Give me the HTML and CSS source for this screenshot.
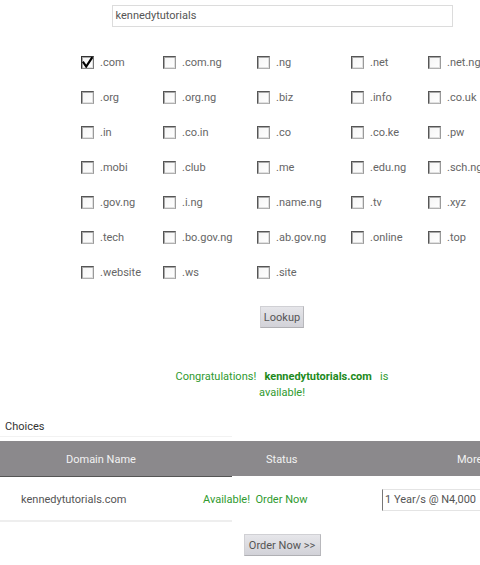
FILE: index.html
```html
<!DOCTYPE html>
<html>
<head>
<meta charset="utf-8">
<link rel="stylesheet" href="styles.css">
</head>
<body>
<div class="page">
  <div class="search">kennedytutorials</div>

  <div class="tlds">
    <label class="tld"><span class="box checked"><svg width="11" height="11" viewBox="0 0 11 11"><path d="M1.5 5.5 L4.2 9.5 L9.8 1" fill="none" stroke="#000" stroke-width="2.2" stroke-linecap="square"/></svg></span>.com</label>
    <label class="tld"><span class="box"></span>.com.ng</label>
    <label class="tld"><span class="box"></span>.ng</label>
    <label class="tld"><span class="box"></span>.net</label>
    <label class="tld"><span class="box"></span>.net.ng</label>

    <label class="tld"><span class="box"></span>.org</label>
    <label class="tld"><span class="box"></span>.org.ng</label>
    <label class="tld"><span class="box"></span>.biz</label>
    <label class="tld"><span class="box"></span>.info</label>
    <label class="tld"><span class="box"></span>.co.uk</label>

    <label class="tld"><span class="box"></span>.in</label>
    <label class="tld"><span class="box"></span>.co.in</label>
    <label class="tld"><span class="box"></span>.co</label>
    <label class="tld"><span class="box"></span>.co.ke</label>
    <label class="tld"><span class="box"></span>.pw</label>

    <label class="tld"><span class="box"></span>.mobi</label>
    <label class="tld"><span class="box"></span>.club</label>
    <label class="tld"><span class="box"></span>.me</label>
    <label class="tld"><span class="box"></span>.edu.ng</label>
    <label class="tld"><span class="box"></span>.sch.ng</label>

    <label class="tld"><span class="box"></span>.gov.ng</label>
    <label class="tld"><span class="box"></span>.i.ng</label>
    <label class="tld"><span class="box"></span>.name.ng</label>
    <label class="tld"><span class="box"></span>.tv</label>
    <label class="tld"><span class="box"></span>.xyz</label>

    <label class="tld"><span class="box"></span>.tech</label>
    <label class="tld"><span class="box"></span>.bo.gov.ng</label>
    <label class="tld"><span class="box"></span>.ab.gov.ng</label>
    <label class="tld"><span class="box"></span>.online</label>
    <label class="tld"><span class="box"></span>.top</label>

    <label class="tld"><span class="box"></span>.website</label>
    <label class="tld"><span class="box"></span>.ws</label>
    <label class="tld"><span class="box"></span>.site</label>
  </div>

  <div class="center"><span class="btn lookup">Lookup</span></div>

  <p class="msg">Congratulations!&nbsp;&nbsp; <b>kennedytutorials.com</b>&nbsp;&nbsp; is available!</p>

  <div class="choices">Choices</div>
  <div class="rule-faint"></div>

  <div class="thead">
    <div class="th c1">Domain Name</div>
    <div class="th c2">Status</div>
    <div class="th c3">More</div>
  </div>
  <div class="rule-dark"></div>
  <div class="trow">
    <div class="td c1">kennedytutorials.com</div>
    <div class="td c2 green">Available!&nbsp; Order Now</div>
    <div class="td c3"><span class="select">1 Year/s @ N4,000</span></div>
  </div>
  <div class="rule-light"></div>

  <div class="center"><span class="btn order">Order Now &gt;&gt;</span></div>
</div>
</body>
</html>
```

FILE: styles.css
```css
html, body {
  margin: 0;
  padding: 0;
  background: #fff;
  overflow: hidden;
}
body {
  font-family: Roboto, "Liberation Sans", sans-serif;
  font-size: 11px;
  color: #666;
}
.page {
  width: 564px;
}
.search {
  box-sizing: border-box;
  width: 341px;
  height: 22px;
  margin: 5px auto 0;
  border: 1px solid #dcdcdc;
  padding-left: 3px;
  line-height: 20px;
  color: #555;
}
.tlds {
  display: grid;
  grid-template-columns: 82px 94px 94px 77px 120px;
  grid-auto-rows: 35px;
  margin: 18px 0 0 81px;
}
.tld {
  display: flex;
  align-items: center;
  white-space: nowrap;
  color: #666;
}
.box {
  box-sizing: border-box;
  width: 13px;
  height: 13px;
  margin-right: 6px;
  border: 1px solid;
  border-color: #555 #9a9a9a #b0b0b0 #555;
  box-shadow: inset 1px 1px 0 #a8a8a8, inset -1px -1px 0 #e0e0e0;
  background: linear-gradient(135deg, #f4f4f4, #fff);
  display: flex;
  align-items: center;
  justify-content: center;
  flex: none;
}
.box.checked {
  border-color: #333 #777 #888 #333;
}
.center {
  display: flex;
  justify-content: center;
}
.btn {
  box-sizing: border-box;
  height: 22px;
  line-height: 21px;
  border: 1px solid #c4c4c8;
  border-color: #d0d0d4 #b8b8bc #b0b0b4 #d0d0d4;
  background: linear-gradient(#e6e6ea, #d2d2d8);
  color: #555;
  font-size: 11px;
  text-align: center;
}
.lookup {
  width: 44px;
  margin-top: 16px;
}
.msg {
  width: 232px;
  margin: 41px auto 0;
  text-align: center;
  line-height: 16px;
  color: #2f9a2f;
}
.msg b {
  color: #1d8a1d;
}
.choices {
  margin-top: 17px;
  padding-left: 5px;
  line-height: 17px;
  color: #333;
}
.rule-faint {
  width: 232px;
  height: 1px;
  margin-top: 1px;
  background: #f2f2f2;
}
.thead {
  display: flex;
  height: 35px;
  margin-top: 4px;
  background: #8b898c;
  align-items: center;
  color: #f2f2f2;
  padding-top: 1px;
  box-sizing: border-box;
}
.trow {
  display: flex;
  height: 41px;
  padding-top: 2px;
  align-items: center;
  color: #555;
}
.c1 { width: 200px; flex: none; }
.c2 { width: 160px; flex: none; }
.c3 { flex: 1; }
.th.c1 { padding-left: 66px; box-sizing: border-box; }
.th.c2 { padding-left: 66px; box-sizing: border-box; }
.th.c3 { padding-left: 97px; }
.td.c1 { padding-left: 21px; box-sizing: border-box; }
.td.c2 { padding-left: 3px; box-sizing: border-box; }
.td.c3 { padding-left: 22px; }
.green { color: #2f9a2f; }
.select {
  display: block;
  box-sizing: border-box;
  width: 160px;
  height: 22px;
  line-height: 20px;
  border: 1px solid #e4e4e4;
  border-left-color: #777;
  padding-left: 2px;
  color: #555;
}
.rule-dark {
  width: 232px;
  height: 1px;
  background: #555;
}
.rule-light {
  width: 232px;
  height: 2px;
  background: #eee;
}
.order {
  width: 77px;
  margin-top: 12px;
}
```
